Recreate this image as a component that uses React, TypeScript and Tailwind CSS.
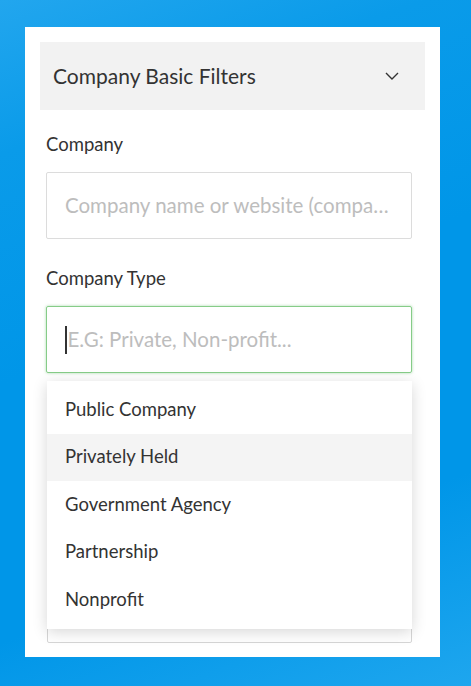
const items = ['Public Company', 'Privately Held', 'Government Agency', 'Partnership', 'Nonprofit'];

export default function App() {
  return (
    <div className="h-[686px] w-full overflow-hidden bg-[linear-gradient(160deg,#22a6ee_0%,#0a9be9_18%,#0096e8_45%,#0096e8_75%,#1ea6ee_100%)] pl-[25px] pt-[27px] font-['Lato',sans-serif]">
      <div className="h-[630px] w-[415px] bg-white p-[15px]">
        {/* header */}
        <div className="flex h-[68px] items-center justify-between bg-[#f2f2f2] pl-[13px] pr-[26px]">
          <span className="text-[21px] text-[#333]">Company Basic Filters</span>
          <svg width="14" height="8" viewBox="0 0 14 8" fill="none">
            <path d="M1 1L7 7L13 1" stroke="#333" strokeWidth="1.4" />
          </svg>
        </div>

        <div className="pl-[6px] pr-[13px]">
          <div className="mt-[22px] mb-[16px] h-[24px] text-[18.5px] leading-[24px] text-[#333]">Company</div>
          <div className="flex h-[67px] items-center rounded-[2px] border border-[#dcdcdc] px-[18px]">
            <span className="truncate text-[20.5px] text-[#bdbdbd]">Company name or website (company.com)</span>
          </div>

          <div className="mt-[27px] mb-[16px] h-[24px] text-[18.5px] leading-[24px] text-[#333]">Company Type</div>
          <div className="relative">
            <div className="flex h-[67px] items-center rounded-[2px] border border-[#86cc88] px-[18px] shadow-[0_0_3px_rgba(130,201,133,0.7)]">
              <span className="mr-[1px] h-[28px] w-[1.5px] bg-[#333]" />
              <span className="text-[20.5px] text-[#bdbdbd]">E.G: Private, Non-profit...</span>
            </div>

            {/* next field, mostly hidden under the open menu */}
            <div className="ml-[1px] mt-[67px] h-[203px] rounded-[2px] border border-[#d6d6d6]" />

            {/* dropdown */}
            <div className="absolute left-[1px] right-0 top-[75px] bg-white py-[5px] shadow-[0_3px_14px_rgba(0,0,0,0.16)]">
              {items.map((item, i) => (
                <div
                  key={item}
                  className={`flex h-[47.5px] items-center px-[18px] text-[18.5px] text-[#333] ${i === 1 ? 'bg-[#f4f4f4]' : ''}`}
                >
                  {item}
                </div>
              ))}
            </div>
          </div>
        </div>
      </div>
    </div>
  );
}
